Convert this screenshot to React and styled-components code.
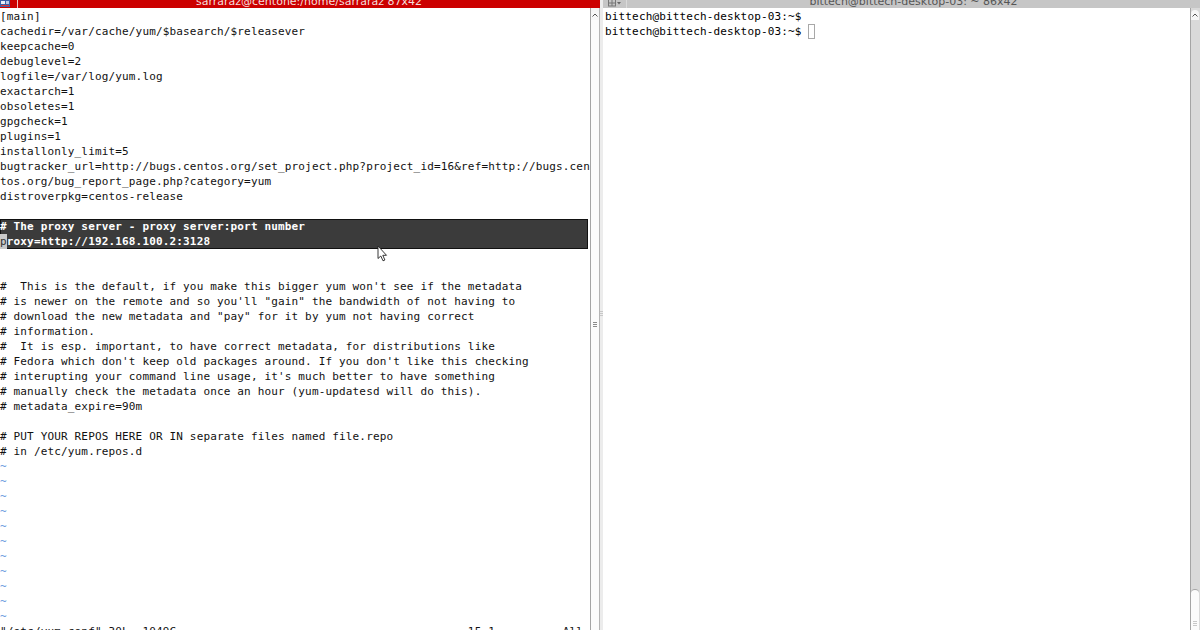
import React from "react";
import styled, { createGlobalStyle } from "styled-components";

const Global = createGlobalStyle`
  html, body { margin: 0; padding: 0; background: #fff; overflow: hidden; }
`;

const vimLines = [
  "[main]",
  "cachedir=/var/cache/yum/$basearch/$releasever",
  "keepcache=0",
  "debuglevel=2",
  "logfile=/var/log/yum.log",
  "exactarch=1",
  "obsoletes=1",
  "gpgcheck=1",
  "plugins=1",
  "installonly_limit=5",
  "bugtracker_url=http://bugs.centos.org/set_project.php?project_id=16&ref=http://bugs.cen",
  "tos.org/bug_report_page.php?category=yum",
  "distroverpkg=centos-release",
  "",
];

const afterLines = [
  "",
  "",
  "#  This is the default, if you make this bigger yum won't see if the metadata",
  "# is newer on the remote and so you'll \"gain\" the bandwidth of not having to",
  "# download the new metadata and \"pay\" for it by yum not having correct",
  "# information.",
  "#  It is esp. important, to have correct metadata, for distributions like",
  "# Fedora which don't keep old packages around. If you don't like this checking",
  "# interupting your command line usage, it's much better to have something",
  "# manually check the metadata once an hour (yum-updatesd will do this).",
  "# metadata_expire=90m",
  "",
  "# PUT YOUR REPOS HERE OR IN separate files named file.repo",
  "# in /etc/yum.repos.d",
];

const status = `${'"/etc/yum.conf" 30L, 1049C'.padEnd(69)}${"15,1".padEnd(14)}All`;

const Screen = styled.div`
  display: flex;
  width: 1200px;
  height: 630px;
  overflow: hidden;
  background: #fff;
`;

const Window = styled.div`
  display: flex;
  flex-direction: column;
  width: ${({ $width }) => $width};
  flex: ${({ $grow }) => ($grow ? 1 : "none")};
  min-width: 0;
`;

const TitleBar = styled.div`
  position: relative;
  display: flex;
  align-items: flex-start;
  height: 8px;
  overflow: hidden;
  background: ${({ $active }) => ($active ? "#cc0000" : "#c6c6c6")};
  color: ${({ $active }) => ($active ? "#f4dede" : "#555")};
`;

const TitleIcon = styled.div`
  display: flex;
  align-items: flex-start;
  width: ${({ $w }) => $w}px;
  padding-left: ${({ $pad }) => $pad}px;
  height: 8px;
  border-right: 1px solid ${({ $active }) => ($active ? "#f0c0c0" : "#dadada")};
  flex: none;
`;

const TitleText = styled.div`
  flex: 1;
  text-align: center;
  font-family: "DejaVu Sans", "Liberation Sans", sans-serif;
  font-size: 11px;
  line-height: 14px;
  margin-top: -5px;
  white-space: pre;
`;

const Body = styled.div`
  display: flex;
  flex: 1;
  min-height: 0;
`;

const TextArea = styled.div`
  position: relative;
  flex: 1;
  min-width: 0;
  overflow: hidden;
  padding-top: 1px;
  padding-left: ${({ $inset }) => $inset || 0}px;
  font-family: "DejaVu Sans Mono", "Liberation Mono", monospace;
  font-size: 11px;
  letter-spacing: 0.158px;
  color: ${({ $ink }) => $ink};
`;

const Line = styled.div`
  height: 15px;
  line-height: 15px;
  white-space: pre;
  color: ${({ $tilde }) => ($tilde ? "#6a9ade" : "inherit")};
`;

const Selection = styled.div`
  margin-right: 2px;
  background: #3b3b3b;
  color: #fff;
  font-weight: bold;
  box-shadow: inset 0 0 0 1px #111;
`;

const Cursor = styled.span`
  background: ${({ $hollow }) => ($hollow ? "transparent" : "#c9c9c9")};
  color: ${({ $hollow }) => ($hollow ? "inherit" : "#333")};
  font-weight: normal;
  display: inline-block;
  width: ${({ $hollow }) => ($hollow ? "7px" : "auto")};
  height: 15px;
  vertical-align: top;
  box-sizing: border-box;
  border: ${({ $hollow }) => ($hollow ? "1px solid #a8a8a8" : "none")};
`;

const Scrollbar = styled.div`
  position: relative;
  width: 10px;
  flex: none;
  box-sizing: border-box;
  display: flex;
  flex-direction: column;
  background: ${({ $trough }) => ($trough ? "#d9d9d9" : "#f3f3f3")};
  border-left: 1px solid #a4a4a4;
  border-right: 1px solid ${({ $trough }) => ($trough ? "#d9d9d9" : "#b4b4b4")};
`;

const ArrowCap = styled.div`
  height: 10px;
  display: flex;
  justify-content: center;
  align-items: center;
  margin-top: 2px;
  background: #f6f6f6;
  border-radius: 4px 4px 0 0;
`;

const Track = styled.div`
  flex: 1;
`;

const Thumb = styled.div`
  height: ${({ $h }) => $h};
  flex: ${({ $h }) => ($h ? "none" : 1)};
  display: flex;
  justify-content: center;
  align-items: ${({ $gripAt }) => ($gripAt === "center" ? "center" : "flex-end")};
  padding-bottom: ${({ $gripAt }) => ($gripAt === "center" ? 0 : "3px")};
  background: #fbfbfb;
  border-top: ${({ $h }) => ($h ? "1px solid #a4a4a4" : "none")};
  border-radius: ${({ $h }) => ($h ? "4px 4px 0 0" : "0")};
`;

const Grip = styled.div`
  width: 4px;
  height: 6px;
  background: repeating-linear-gradient(
    to bottom,
    ${({ $light }) => ($light ? "#c8c8c8" : "#8a8a8a")} 0 1px,
    transparent 1px 2px
  );
`;

const Divider = styled.div`
  width: 3px;
  flex: none;
  display: flex;
  align-items: center;
  justify-content: center;
  background: #ececec;
  padding-bottom: 2px;
`;

const Pointer = styled.svg`
  position: absolute;
  left: 377px;
  top: 237px;
`;

const UpArrow = () => (
  <svg width="6" height="4" viewBox="0 0 6 4">
    <path d="M0.5 3.5 L3 1 L5.5 3.5" fill="none" stroke="#555" strokeWidth="1" />
  </svg>
);

const TermIcon = () => (
  <svg width="10" height="8" viewBox="0 0 10 8">
    <rect x="0" y="0" width="10" height="7" fill="#3a5fa8" />
    <rect x="1" y="1" width="4" height="3" fill="#e8eef8" />
    <rect x="6" y="1" width="3" height="3" fill="#b8c8e8" />
    <rect x="1" y="5" width="8" height="1" fill="#d33" />
  </svg>
);

const MenuIcon = () => (
  <svg width="14" height="8" viewBox="0 0 14 8">
    <rect x="0.5" y="-1" width="7" height="7" fill="none" stroke="#777" strokeWidth="1" />
    <line x1="4" y1="-1" x2="4" y2="6" stroke="#777" />
    <line x1="0.5" y1="3" x2="7.5" y2="3" stroke="#777" />
    <path d="M9 2 L11 4.5 L13 2 Z" fill="#666" />
  </svg>
);

export default function App() {
  return (
    <>
      <Global />
      <Screen>
        <Window $width="600px">
          <TitleBar $active>
            <TitleIcon $active $w={17} $pad={0}>
              <TermIcon />
            </TitleIcon>
            <TitleText>sarraraz@centone:/home/sarraraz 87x42</TitleText>
          </TitleBar>
          <Body>
            <TextArea $ink="#111">
              {vimLines.map((l, i) => (
                <Line key={"a" + i}>{l}</Line>
              ))}
              <Selection>
                <Line># The proxy server - proxy server:port number</Line>
                <Line>
                  <Cursor>p</Cursor>roxy=http://192.168.100.2:3128
                </Line>
              </Selection>
              {afterLines.map((l, i) => (
                <Line key={"b" + i}>{l}</Line>
              ))}
              {Array.from({ length: 11 }).map((_, i) => (
                <Line key={"t" + i} $tilde>
                  ~
                </Line>
              ))}
              <Line>{status}</Line>
              <Pointer width="11" height="17" viewBox="0 0 11 17">
                <path
                  d="M1 1 L1 13.5 L3.8 11 L6 15.8 L7.9 15 L5.8 10.3 L9.5 10.3 Z"
                  fill="#fff"
                  stroke="#222"
                  strokeWidth="0.9"
                  strokeLinejoin="round"
                />
              </Pointer>
            </TextArea>
            <Scrollbar>
              <ArrowCap>
                <UpArrow />
              </ArrowCap>
              <Thumb $gripAt="center">
                <Grip />
              </Thumb>
            </Scrollbar>
          </Body>
        </Window>
        <Divider>
          <Grip $light />
        </Divider>
        <Window $grow>
          <TitleBar>
            <TitleIcon $w={18} $pad={5}>
              <MenuIcon />
            </TitleIcon>
            <TitleText>bittech@bittech-desktop-03: ~ 86x42</TitleText>
          </TitleBar>
          <Body>
            <TextArea $ink="#000" $inset={2}>
              <Line>bittech@bittech-desktop-03:~$</Line>
              <Line>
                bittech@bittech-desktop-03:~$ <Cursor $hollow />
              </Line>
            </TextArea>
            <Scrollbar $trough>
              <ArrowCap>
                <UpArrow />
              </ArrowCap>
              <Track />
              <Thumb $h="37px">
                <Grip $light />
              </Thumb>
            </Scrollbar>
          </Body>
        </Window>
      </Screen>
    </>
  );
}
